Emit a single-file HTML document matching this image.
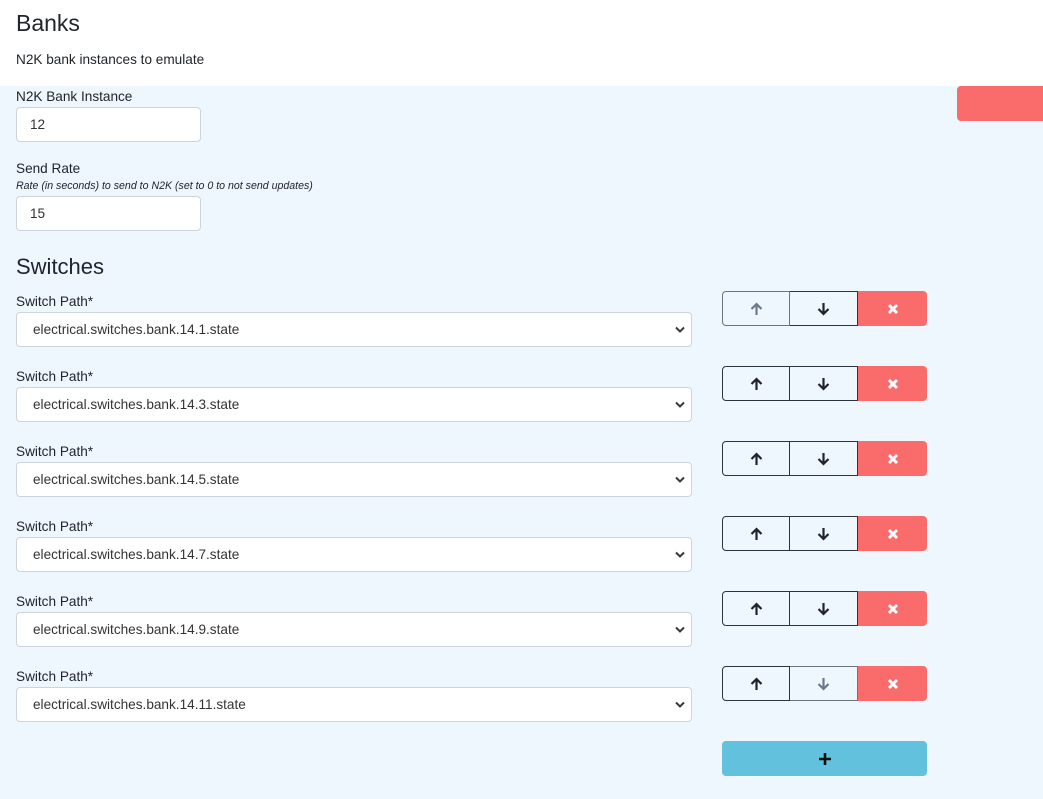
<!DOCTYPE html>
<html><head><meta charset="utf-8"><style>
*{box-sizing:border-box;margin:0;padding:0}
body{width:1043px;height:799px;overflow:hidden;background:#fff;font-family:"Liberation Sans",sans-serif;color:#212529;position:relative}
.a{position:absolute}
.bg{left:0;top:86px;width:1043px;height:713px;background:#eef6fe}
.lbl{font-size:13.6px;left:16px}
.inp{left:16px;width:185px;height:35px;background:#fff;border:1px solid #ced4da;border-radius:4px;font-size:13.6px;padding:9px 13px;color:#333}
.sel{left:16px;width:676px;height:35px;background:#fff;border:1px solid #ced4da;border-radius:4px;font-size:13.6px;padding:9px 16px;color:#333}
.sel svg{position:absolute;right:5px;top:12px}
.grp{left:722px;width:205px;height:35px;display:flex}
.b{width:68px;height:35px;border:1px solid #2c3440;display:flex;align-items:center;justify-content:center}
.b1{border-radius:4px 0 0 4px}
.b2{border-left:none}
.b3{width:69px;background:#fa6c6c;border:none;border-radius:0 4px 4px 0}
.dis{border-color:#6c757d}
</style></head><body>
<div class="a" style="left:16px;top:10px;font-size:23px">Banks</div>
<div class="a" style="left:16px;top:52px;font-size:13.6px">N2K bank instances to emulate</div>
<div class="a bg"></div>
<div class="a" style="left:957px;top:86px;width:90px;height:35px;background:#fa6c6c;border-radius:4px"></div>
<div class="a lbl" style="top:89px">N2K Bank Instance</div>
<div class="a inp" style="top:107px">12</div>
<div class="a lbl" style="top:161px">Send Rate</div>
<div class="a" style="left:16px;top:180px;font-size:10.6px;font-style:italic">Rate (in seconds) to send to N2K (set to 0 to not send updates)</div>
<div class="a inp" style="top:196px">15</div>
<div class="a" style="left:16px;top:254px;font-size:22px">Switches</div>
<div id="rows"></div>
<div class="a" style="left:722px;top:741px;width:205px;height:35px;background:#62c2de;border-radius:4px;display:flex;align-items:center;justify-content:center">
<svg width="14" height="14" viewBox="0 0 14 14"><path d="M7 1v12M1 7h12" stroke="#111" stroke-width="2.6"/></svg></div>
<script>
var paths=["1","3","5","7","9","11"],h="";
function up(c){return '<svg width="13" height="14" viewBox="0 0 13 14"><path d="M6.5 13V2M1.5 7L6.5 2l5 5" stroke="'+c+'" stroke-width="2.2" fill="none"/></svg>'}
function dn(c){return '<svg width="13" height="14" viewBox="0 0 13 14"><path d="M6.5 1v11M1.5 7l5 5 5-5" stroke="'+c+'" stroke-width="2.2" fill="none"/></svg>'}
var x='<svg width="12" height="12" viewBox="0 0 12 12"><path d="M2 2l8 8M10 2l-8 8" stroke="#fff" stroke-width="3"/></svg>';
for(var i=0;i<6;i++){var t=291+75*i;
h+='<div class="a lbl" style="top:'+(t+3)+'px">Switch Path*</div>';
h+='<div class="a sel" style="top:'+(t+21)+'px">electrical.switches.bank.14.'+paths[i]+'.state<svg width="12" height="9" viewBox="0 0 12 9"><path d="M2 2.5l4 4 4-4" stroke="#343a40" stroke-width="2" fill="none"/></svg></div>';
var u=i==0,d=i==5;
h+='<div class="a grp" style="top:'+t+'px"><div class="b b1 '+(u?'dis':'')+'">'+up(u?'#6c7a88':'#212529')+'</div><div class="b b2 '+(d?'dis':'')+'">'+dn(d?'#6c7a88':'#212529')+'</div><div class="b b3">'+x+'</div></div>';}
document.getElementById('rows').innerHTML=h;
</script>
</body></html>
